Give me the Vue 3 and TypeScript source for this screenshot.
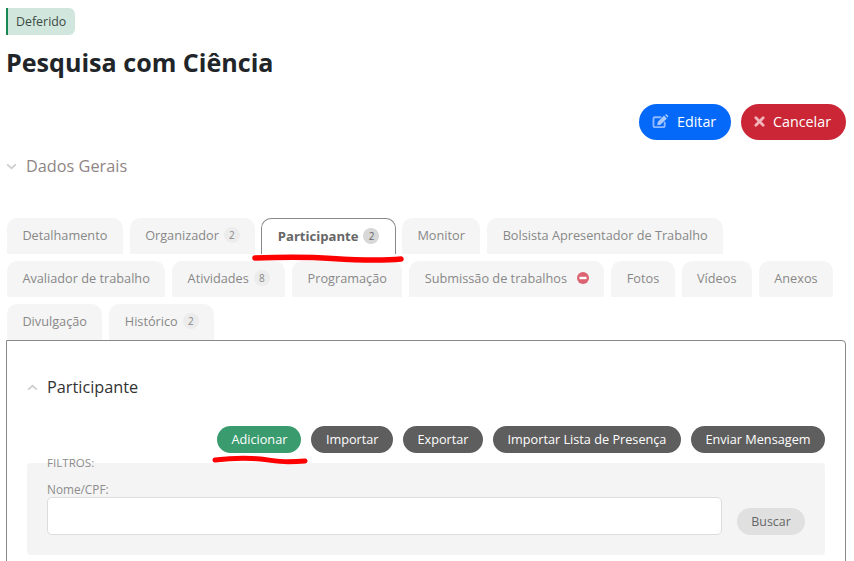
<script setup lang="ts">
interface Tab { label: string; count?: number; active?: boolean; blocked?: boolean }
const tabs: Tab[] = [
  { label: 'Detalhamento' },
  { label: 'Organizador', count: 2 },
  { label: 'Participante', count: 2, active: true },
  { label: 'Monitor' },
  { label: 'Bolsista Apresentador de Trabalho' },
  { label: 'Avaliador de trabalho' },
  { label: 'Atividades', count: 8 },
  { label: 'Programação' },
  { label: 'Submissão de trabalhos', blocked: true },
  { label: 'Fotos' },
  { label: 'Vídeos' },
  { label: 'Anexos' },
  { label: 'Divulgação' },
  { label: 'Histórico', count: 2 },
]
const actions = ['Importar', 'Exportar', 'Importar Lista de Presença', 'Enviar Mensagem']
</script>

<template>
  <div class="page">
    <span class="status">Deferido</span>
    <h1 class="title">Pesquisa com Ciência</h1>

    <div class="top-actions">
      <button class="pill pill-blue">
        <svg class="ic" viewBox="0 0 18 16" width="17" height="15">
          <path d="M2.500 3.500h6.500M13.500 9v3.500a1.500 1.500 0 0 1-1.500 1.500H3a1.500 1.500 0 0 1-1.500-1.500V5A1.500 1.500 0 0 1 3 3.500" stroke="#8db8ff" stroke-width="2" fill="none" stroke-linecap="round" />
          <path d="M6 8.500 12.800 1.700l3 3L9 11.500 5.500 12z" fill="#a9c9ff" />
          <path d="M13.700.9l.7-.5c.4-.3.9-.3 1.200 0l1.500 1.500c.3.300.3.800 0 1.200l-.5.700z" fill="#a9c9ff" />
        </svg>
        Editar
      </button>
      <button class="pill pill-red">
        <svg class="ic" viewBox="0 0 12 12" width="11" height="11">
          <path d="M2 2l8 8M10 2l-8 8" stroke="#f2b4bb" stroke-width="3" stroke-linecap="round" fill="none" />
        </svg>
        Cancelar
      </button>
    </div>

    <div class="section-head muted">
      <svg viewBox="0 0 12 8" width="11" height="7"><path d="M1 1.500l5 4.500 5-4.500" stroke="#cfcfcf" stroke-width="2" fill="none" /></svg>
      <span>Dados Gerais</span>
    </div>

    <div class="tabs">
      <div v-for="t in tabs" :key="t.label" class="tab" :class="{ active: t.active }">
        <span>{{ t.label }}</span>
        <span v-if="t.count" class="count">{{ t.count }}</span>
        <svg v-if="t.blocked" class="blocked" viewBox="0 0 12 12" width="12" height="12">
          <circle cx="6" cy="6" r="6" fill="#dc6472" />
          <rect x="2.500" y="4.800" width="7" height="2.400" fill="#fff" />
        </svg>
      </div>
    </div>

    <div class="panel">
      <div class="section-head inner">
        <svg viewBox="0 0 12 8" width="11" height="7"><path d="M1 6.500l5-4.500 5 4.500" stroke="#cfcfcf" stroke-width="2" fill="none" /></svg>
        <span>Participante</span>
      </div>

      <div class="actions">
        <button class="small small-green">Adicionar</button>
        <button v-for="a in actions" :key="a" class="small small-dark">{{ a }}</button>
      </div>

      <div class="filters">
        <div class="filters-title">FILTROS:</div>
        <div class="filters-row">
          <label class="field">
            <span class="field-label">Nome/CPF:</span>
            <input class="input" type="text" />
          </label>
          <button class="small small-light">Buscar</button>
        </div>
      </div>
    </div>

    <svg class="scribble scribble-tab" viewBox="0 0 156 14" width="156" height="14">
      <path d="M3 6C30 5 52 4.500 80 6.500c24 1.500 48 2.500 69 .5" stroke="#ff0000" stroke-width="5.500" stroke-linecap="round" fill="none" />
    </svg>
    <svg class="scribble scribble-add" viewBox="0 0 98 10" width="98" height="10">
      <path d="M3 5C16 3.500 28 3 40 3.500c12 .5 24 3 36 3.300 6 0 12-.3 17-.8" stroke="#ff0000" stroke-width="5" stroke-linecap="round" fill="none" />
    </svg>
  </div>
</template>

<style>
html, body { margin: 0; overflow: hidden; background: #fff; }
</style>

<style scoped>
.page {
  position: relative;
  padding: 8px 8px 0 6px;
  font-family: "Open Sans", sans-serif;
  font-size: 13px;
  color: #212529;
  box-sizing: border-box;
}
button { font-family: inherit; border: 0; cursor: pointer; }
.status {
  display: block;
  width: fit-content;
  height: 27px;
  line-height: 27px;
  box-sizing: border-box;
  padding: 0 9px 0 8px;
  border-left: 2px solid #198754;
  border-radius: 0 6px 6px 0;
  background: #d1e7dd;
  color: #3c4a44;
  font-size: 12.4px;
}
.title {
  margin: 11px 0 0;
  font-size: 25.1px;
  line-height: 33px;
  font-weight: 700;
  color: #212529;
}
.top-actions {
  display: flex;
  justify-content: flex-end;
  gap: 10px;
  margin-top: 25px;
}
.pill {
  display: flex;
  align-items: center;
  gap: 8px;
  height: 36px;
  border-radius: 18px;
  color: #fff;
  font-size: 14.3px;
  font-weight: 500;
  box-sizing: border-box;
  padding: 0 0 2px 13px;
}
.pill-blue { background: #0468f8; width: 92px; }
.pill-red { background: #ca2636; width: 105px; }
.section-head {
  display: flex;
  align-items: center;
  font-size: 16.3px;
  line-height: 22px;
}
.section-head svg { margin-right: 9px; }
.section-head.muted { margin-top: 15px; color: #8f8585; }
.section-head.inner { margin-top: 35px; color: #333; }
.tabs {
  display: flex;
  flex-wrap: wrap;
  gap: 7px;
  margin-top: 41px;
  padding-left: 1px;
}
.tab {
  display: flex;
  align-items: center;
  height: 36px;
  box-sizing: border-box;
  padding: 0 15.400px 2px;
  background: #f5f5f5;
  border-radius: 10px 10px 0 0;
  color: #888;
  font-size: 12.72px;
}
.tab.active {
  background: #fff;
  border: 1px solid #888;
  border-bottom: 0;
  color: #666;
  font-weight: 700;
  font-size: 13.1px;
  padding: 0 16px 2px;
  margin: 0 -1.500px;
}
.count {
  display: inline-block;
  width: 16px;
  height: 16px;
  line-height: 16px;
  margin-left: 5px;
  border-radius: 50%;
  background: #ececec;
  color: #888;
  font-size: 10px;
  font-weight: 400;
  text-align: center;
}
.tab.active .count { background: #d8d8d8; color: #666; }
.blocked { margin-left: 10px; }
.panel {
  border: 1px solid #888;
  border-radius: 0 4px 0 0;
  padding: 0 20px 40px;
  width: 840px;
  box-sizing: border-box;
}
.actions {
  display: flex;
  justify-content: flex-end;
  gap: 10px;
  margin-top: 28px;
}
.small {
  height: 27px;
  padding: 0 14px 2px;
  border-radius: 14px;
  color: #fff;
  font-size: 12.7px;
  font-weight: 500;
}
.small-green { background: #3a9b6e; }
.small-dark { background: #5e5e5e; padding: 0 14.500px 2px; }
.small-light { background: #e0e0e0; color: #666; font-weight: 400; font-size: 12.4px; padding: 0 14px; width: 68px; }
.filters {
  margin-top: 10px;
  background: #f4f4f4;
  border-radius: 4px;
  height: 92px;
  padding: 0 20px;
  box-sizing: border-box;
}
.filters-title {
  font-size: 11.6px;
  line-height: 16px;
  color: #8c8c8c;
  position: relative;
  top: -8px;
}
.filters-row {
  display: flex;
  align-items: flex-end;
  gap: 15px;
}
.field { display: flex; flex-direction: column; width: 675px; margin-top: 3px; }
.field-label { font-size: 11.8px; line-height: 15px; color: #8c8c8c; }
.input {
  height: 38px;
  box-sizing: border-box;
  border: 1px solid #ddd;
  border-radius: 5px;
  background: #fff;
  outline: 0;
}
.scribble { position: absolute; }
.scribble-tab { left: 252px; top: 252px; }
.scribble-add { left: 212px; top: 455px; }
</style>
